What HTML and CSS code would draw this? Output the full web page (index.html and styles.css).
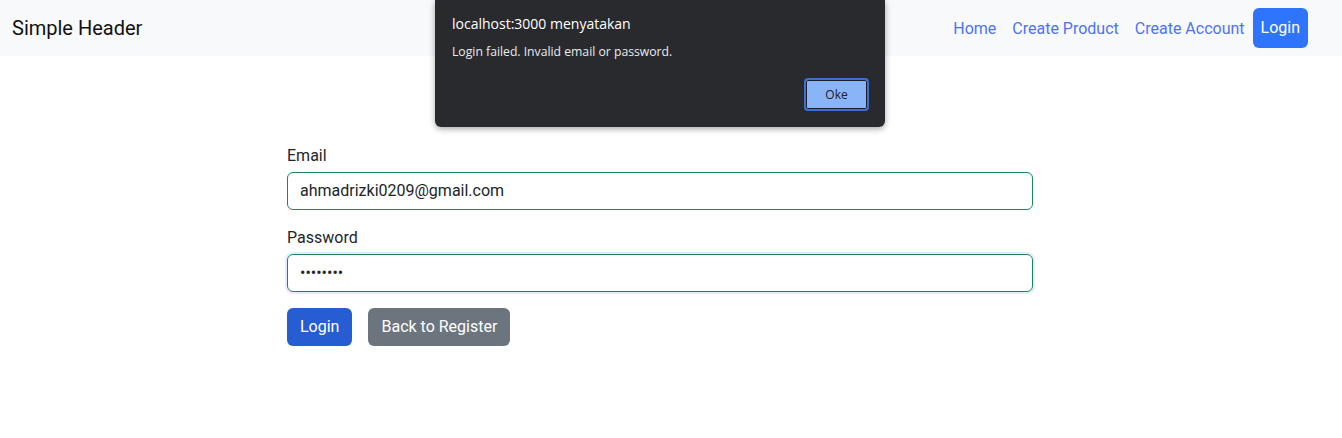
FILE: index.html
```html
<!DOCTYPE html>
<html>
<head>
<meta charset="utf-8">
<link rel="stylesheet" href="styles.css">
</head>
<body>
<nav class="navbar">
  <span class="brand">Simple Header</span>
  <div class="nav-links">
    <a class="nav-link">Home</a>
    <a class="nav-link">Create Product</a>
    <a class="nav-link">Create Account</a>
    <a class="nav-btn">Login</a>
  </div>
</nav>
<main class="page">
  <form class="login-form">
    <label class="form-label">Email</label>
    <div class="form-control valid">ahmadrizki0209@gmail.com</div>
    <label class="form-label second">Password</label>
    <div class="form-control valid focus">••••••••</div>
    <div class="actions">
      <span class="btn btn-primary">Login</span>
      <span class="btn btn-secondary">Back to Register</span>
    </div>
  </form>
</main>
<div class="dialog">
  <div class="dialog-title">localhost:3000 menyatakan</div>
  <div class="dialog-msg">Login failed. Invalid email or password.</div>
  <div class="dialog-actions"><span class="dialog-btn">Oke</span></div>
</div>
</body>
</html>
```
FILE: styles.css
```css
* { box-sizing: border-box; }
body {
  margin: 0;
  font-family: Roboto, "Liberation Sans", sans-serif;
  color: #212529;
  background: #fff;
}
.navbar {
  height: 56px;
  background: #f8f9fa;
  display: flex;
  align-items: center;
  justify-content: space-between;
  padding: 0 34px 0 12px;
}
.brand {
  font-size: 20px;
  color: #111;
}
.nav-links {
  display: flex;
  align-items: center;
}
.nav-link {
  font-size: 16px;
  color: #4f72f4;
  padding: 8px;
}
.nav-btn {
  font-size: 16px;
  color: #fff;
  background: #2f74fc;
  border-radius: 6px;
  height: 40px;
  line-height: 40px;
  padding: 0 8px;
}
.page {
  padding: 88px 0 0 287px;
}
.login-form {
  width: 746px;
  display: flex;
  flex-direction: column;
}
.form-label {
  font-size: 16px;
  line-height: 24px;
  margin-bottom: 4px;
  color: #212529;
}
.form-label.second { margin-top: 16px; }
.form-control {
  height: 38px;
  border: 1px solid #198754;
  border-radius: 6px;
  padding: 0 12px;
  font-size: 16px;
  line-height: 36px;
  color: #212529;
}
.form-control.focus {
  box-shadow: 0 0 0 2px rgba(13, 110, 253, 0.12);
}
.actions {
  margin-top: 16px;
  display: flex;
  gap: 16px;
}
.btn {
  height: 38px;
  line-height: 38px;
  padding: 0 13px;
  border-radius: 6px;
  color: #fff;
  font-size: 16px;
}
.btn-primary { background: #265dd3; }
.btn-secondary { background: #6c757d; }
.dialog {
  position: absolute;
  left: 435px;
  top: 0;
  width: 450px;
  height: 127px;
  background: #292a2d;
  border-radius: 0 0 6px 6px;
  box-shadow: 0 2px 6px rgba(0, 0, 0, 0.35);
  padding: 14px 16px 0 17px;
  font-family: "Open Sans", "Noto Sans", sans-serif;
  color: #e8eaed;
}
.dialog-title {
  font-size: 14px;
  line-height: 20px;
  color: #fff;
}
.dialog-msg {
  font-size: 12.2px;
  line-height: 18px;
  margin-top: 9px;
}
.dialog-actions {
  display: flex;
  justify-content: flex-end;
  margin-top: 17px;
}
.dialog-btn {
  width: 65px;
  height: 33px;
  background: #8ab4f8;
  border: 2px solid #3b6fd6;
  border-radius: 4px;
  box-shadow: inset 0 0 0 1px #1f2022;
  color: #202124;
  font-size: 12px;
  display: flex;
  align-items: center;
  justify-content: center;
}
```
